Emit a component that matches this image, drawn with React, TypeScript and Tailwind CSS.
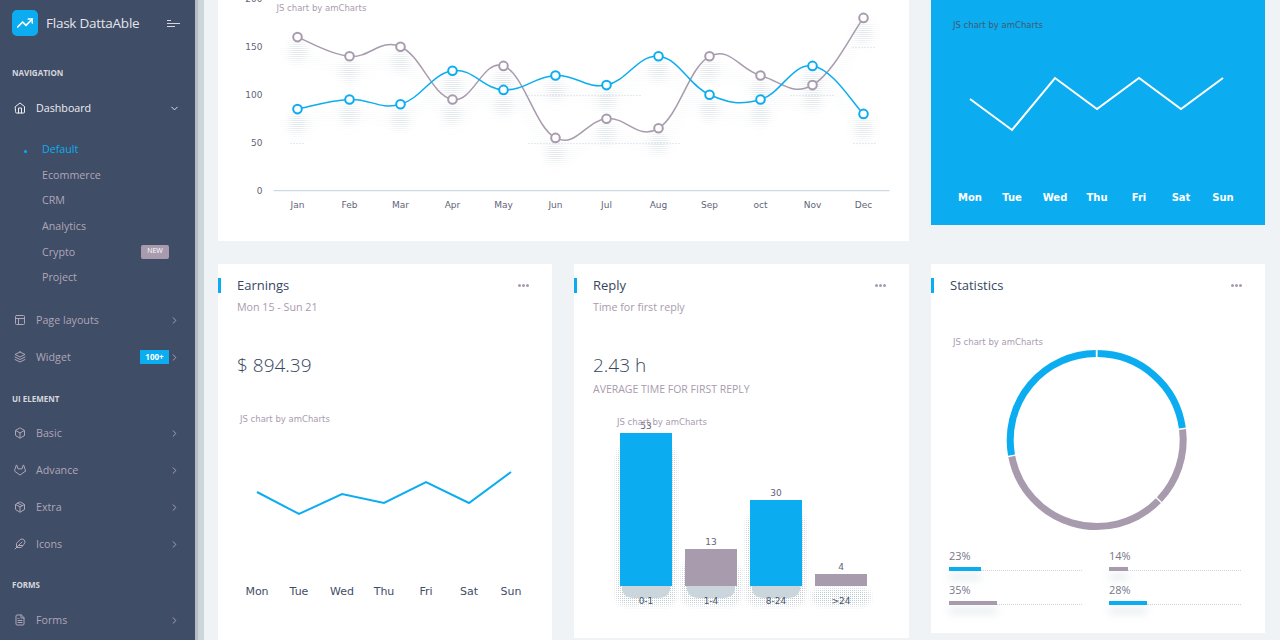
import type { ReactNode } from "react";
import {
  FiBox,
  FiChevronDown,
  FiChevronRight,
  FiFeather,
  FiFileText,
  FiGitlab,
  FiHome,
  FiLayers,
  FiLayout,
  FiPackage,
  FiTrendingUp,
} from "react-icons/fi";

const months = ["Jan", "Feb", "Mar", "Apr", "May", "Jun", "Jul", "Aug", "Sep", "oct", "Nov", "Dec"];
const monthX = [297, 349, 400, 452, 503, 555, 606, 658, 709, 760, 812, 863];
const grayVals = [160, 140, 150, 95, 130, 55, 75, 65, 140, 120, 110, 180];
const blueVals = [85, 95, 90, 125, 105, 120, 110, 140, 100, 95, 130, 80];
const days = ["Mon", "Tue", "Wed", "Thu", "Fri", "Sat", "Sun"];

const toY = (v: number) => 190.7 - v * 0.96;

function smooth(pts: number[][]) {
  let d = `M${pts[0][0]} ${pts[0][1]}`;
  const k = 0.2;
  for (let i = 0; i < pts.length - 1; i++) {
    const p0 = pts[i - 1] ?? pts[i];
    const p1 = pts[i];
    const p2 = pts[i + 1];
    const p3 = pts[i + 2] ?? p2;
    const c1x = p1[0] + (p2[0] - p0[0]) * k;
    const c1y = p1[1] + (p2[1] - p0[1]) * k;
    const c2x = p2[0] - (p3[0] - p1[0]) * k;
    const c2y = p2[1] - (p3[1] - p1[1]) * k;
    d += ` C${c1x} ${c1y} ${c2x} ${c2y} ${p2[0]} ${p2[1]}`;
  }
  return d;
}

function arc(cx: number, cy: number, r: number, from: number, to: number) {
  const pt = (a: number) => {
    const t = ((a - 90) * Math.PI) / 180;
    return `${cx + r * Math.cos(t)} ${cy + r * Math.sin(t)}`;
  };
  return `M${pt(from)} A${r} ${r} 0 ${to - from > 180 ? 1 : 0} 1 ${pt(to)}`;
}

// the reference's shadows are dithered, so paint them as dots through a blurred mask
function DotShadow({ id, blur, children }: { id: string; blur: number; children: ReactNode }) {
  return (
    <>
      <defs>
        <pattern id={`${id}-dots`} width="2" height="2" patternUnits="userSpaceOnUse">
          <rect width="1" height="1" fill="#bccad2" />
        </pattern>
        <filter id={`${id}-blur`} x="-50%" y="-50%" width="200%" height="200%">
          <feGaussianBlur stdDeviation={blur} />
        </filter>
        <mask id={`${id}-mask`} maskUnits="userSpaceOnUse" x="200" y="0" width="1100" height="700">
          <g filter={`url(#${id}-blur)`}>{children}</g>
        </mask>
      </defs>
      <rect x="200" y="0" width="1100" height="700" fill={`url(#${id}-dots)`} mask={`url(#${id}-mask)`} />
    </>
  );
}

function NavLabel({ children, className }: { children: ReactNode; className: string }) {
  return (
    <div className={`h-5 pl-3 flex items-center text-[8px] font-bold text-[#d6d6de] ${className}`}>{children}</div>
  );
}

function NavItem({ icon, label, badge }: { icon: ReactNode; label: string; badge?: ReactNode }) {
  return (
    <div className="h-[37px] flex items-center pl-[14px] pr-[15px] text-[10.7px] text-[#b0a6b8]">
      <span className="w-[22px] text-[12px]">{icon}</span>
      <span className="flex-1">{label}</span>
      {badge}
      <FiChevronRight className="w-[11px] h-[11px]" />
    </div>
  );
}

function SubItem({ label, active, badge }: { label: string; active?: boolean; badge?: ReactNode }) {
  return (
    <div className={`h-[25.6px] flex items-center pr-[26px] text-[10.7px] ${active ? "text-[#0cadf0]" : "text-[#b0a6b8]"}`}>
      <span className="w-[42px] flex justify-end pr-[15px] pt-[4px]">
        {active && <span className="w-[3px] h-[3px] rounded-full bg-[#0cadf0]" />}
      </span>
      <span className="flex-1">{label}</span>
      {badge}
    </div>
  );
}

function Sidebar() {
  return (
    <aside className="relative z-10 w-[195px] shrink-0 h-full overflow-hidden bg-[#3f4d67] shadow-[3px_0_0_#b8bac4,9px_0_0_#cbd6db]">
      <div className="h-[46px] flex items-center pl-3 pr-[15px]">
        <div className="w-[26px] h-[26px] rounded-[5px] bg-[#0cadf0] flex items-center justify-center text-white">
          <FiTrendingUp className="w-4 h-4" strokeWidth={2.5} />
        </div>
        <span className="ml-2 flex-1 text-[13.5px] text-[#e4e4ea] tracking-[-0.25px]">Flask DattaAble</span>
        <div className="flex flex-col gap-[2px] w-[13px]">
          <span className="h-px w-[4px] bg-[#d6d6de]" />
          <span className="h-px w-[13px] bg-[#d6d6de]" />
          <span className="h-px w-[8px] bg-[#d6d6de]" />
        </div>
      </div>

      <NavLabel className="mt-[17px]">NAVIGATION</NavLabel>
      <div className="mt-[6.5px] h-[37px] flex items-center pl-[14px] pr-[15px] text-[10.7px] text-[#eeeef2]">
        <span className="w-[22px] text-[12px]"><FiHome /></span>
        <span className="flex-1">Dashboard</span>
        <FiChevronDown className="w-[11px] h-[11px]" />
      </div>
      <div className="pt-[10px] pb-[11.7px]">
        <SubItem label="Default" active />
        <SubItem label="Ecommerce" />
        <SubItem label="CRM" />
        <SubItem label="Analytics" />
        <SubItem
          label="Crypto"
          badge={<span className="w-[28px] h-[14px] rounded-[2px] bg-[#a89bae] text-white text-[7px] flex items-center justify-center">NEW</span>}
        />
        <SubItem label="Project" />
      </div>
      <NavItem icon={<FiLayout />} label="Page layouts" />
      <NavItem
        icon={<FiLayers />}
        label="Widget"
        badge={<span className="w-[29px] h-[14px] bg-[#0cadf0] text-white text-[8px] font-bold flex items-center justify-center">100+</span>}
      />

      <NavLabel className="mt-[13.5px]">UI ELEMENT</NavLabel>
      <div className="mt-[5.5px]">
        <NavItem icon={<FiBox />} label="Basic" />
        <NavItem icon={<FiGitlab />} label="Advance" />
        <NavItem icon={<FiPackage />} label="Extra" />
        <NavItem icon={<FiFeather />} label="Icons" />
      </div>

      <NavLabel className="mt-[12.5px]">FORMS</NavLabel>
      <div className="mt-[6.5px]">
        <NavItem icon={<FiFileText />} label="Forms" />
      </div>
    </aside>
  );
}

function Watermark({ x, y, fill = "#a99cb0" }: { x: number; y: number; fill?: string }) {
  return (
    <text x={x} y={y} fontSize="8.5" fill={fill}>
      JS chart by amCharts
    </text>
  );
}

function MainChart() {
  const gray = grayVals.map((v, i) => [monthX[i], toY(v)]);
  const blue = blueVals.map((v, i) => [monthX[i], toY(v)]);
  const dotted: number[][] = [
    [290, 304, 143],
    [528, 680, 143],
    [853, 875, 143],
    [525, 640, 95],
    [790, 835, 95],
    [852, 875, 47],
  ];
  return (
    <svg viewBox="218 0 690 241" className="block w-full h-full [font-family:'DejaVu_Sans',sans-serif]">
      <DotShadow id="main" blur={5}>
        {[...gray, ...blue].map(([x, y], i) => (
          <ellipse key={i} cx={x} cy={y + 15} rx="9" ry="10" fill="#fff" />
        ))}
        <g fill="none" stroke="#fff" strokeWidth="3" opacity="0.5" transform="translate(0 15)">
          <path d={smooth(gray)} />
          <path d={smooth(blue)} />
        </g>
      </DotShadow>
      {dotted.map(([a, b, y], i) => (
        <line key={i} x1={a} x2={b} y1={y + 0.5} y2={y + 0.5} stroke="#c9d5dc" strokeWidth="1" strokeDasharray="1 2" />
      ))}
      <text x="262" y="2" textAnchor="end" fontSize="9" fill="#5f6478">200</text>
      <text x="262" y="50" textAnchor="end" fontSize="9" fill="#5f6478">150</text>
      <text x="262" y="98" textAnchor="end" fontSize="9" fill="#5f6478">100</text>
      <text x="262" y="146" textAnchor="end" fontSize="9" fill="#5f6478">50</text>
      <text x="262" y="194" textAnchor="end" fontSize="9" fill="#5f6478">0</text>
      <Watermark x={276} y={11} />
      <line x1="273" x2="889" y1="190.7" y2="190.7" stroke="#c3d2da" strokeWidth="1" />
      {months.map((m, i) => (
        <text key={m} x={monthX[i]} y="208" textAnchor="middle" fontSize="9" fill="#5f6478">{m}</text>
      ))}
      <path d={smooth(gray)} fill="none" stroke="#a89bae" strokeWidth="1.5" />
      <path d={smooth(blue)} fill="none" stroke="#0cadf0" strokeWidth="1.5" />
      {gray.map(([x, y], i) => (
        <circle key={i} cx={x} cy={y} r="4.3" fill="#fff" stroke="#a89bae" strokeWidth="2" />
      ))}
      {blue.map(([x, y], i) => (
        <circle key={i} cx={x} cy={y} r="4.3" fill="#fff" stroke="#0cadf0" strokeWidth="2" />
      ))}
    </svg>
  );
}

function BlueChart() {
  const xs = [970, 1012, 1055, 1097, 1139, 1181, 1223];
  const ys = [99, 130, 78, 109, 78, 109, 78];
  return (
    <svg viewBox="931 0 334 225" className="block w-full h-full [font-family:'DejaVu_Sans',sans-serif]">
      <Watermark x={953} y={28} fill="#3f5a73" />
      <polyline points={xs.map((x, i) => `${x},${ys[i]}`).join(" ")} fill="none" stroke="#fff" strokeWidth="2" />
      {days.map((d, i) => (
        <text key={d} x={xs[i]} y="201" textAnchor="middle" fontSize="10" fontWeight="700" fill="#fff">{d}</text>
      ))}
    </svg>
  );
}

function CardHead({ title, sub }: { title: string; sub?: string }) {
  return (
    <>
      <div className="pt-[14px]">
        <div className="h-[15px] border-l-[3px] border-[#0cadf0] pl-4 pr-[23px] flex items-center justify-between">
          <span className="text-[13px] text-[#37475f]">{title}</span>
          <span className="flex gap-px">
            <span className="w-[3px] h-[3px] rounded-full bg-[#a89bae]" />
            <span className="w-[3px] h-[3px] rounded-full bg-[#a89bae]" />
            <span className="w-[3px] h-[3px] rounded-full bg-[#a89bae]" />
          </span>
        </div>
      </div>
      {sub && <div className="mt-[6px] h-4 pl-[19px] text-[10.7px] leading-4 text-[#a89bae]">{sub}</div>}
    </>
  );
}

function EarningsChart() {
  const xs = [257, 299, 342, 384, 426, 469, 511];
  const ys = [492, 514, 494, 503, 482, 503, 472];
  return (
    <svg viewBox="218 405 334 205" className="mt-[28px] block w-[334px] h-[205px] [font-family:'DejaVu_Sans',sans-serif]">
      <Watermark x={240} y={422} />
      <polyline points={xs.map((x, i) => `${x},${ys[i]}`).join(" ")} fill="none" stroke="#0cadf0" strokeWidth="2" />
      {days.map((d, i) => (
        <text key={d} x={xs[i]} y="595" textAnchor="middle" fontSize="11" fill="#3f4d67">{d}</text>
      ))}
    </svg>
  );
}

function ReplyChart() {
  const bars = [
    { x: 620, y: 433, val: "53", label: "0-1", color: "#0cadf0" },
    { x: 685, y: 549, val: "13", label: "1-4", color: "#a89bae" },
    { x: 750, y: 500, val: "30", label: "8-24", color: "#0cadf0" },
    { x: 815, y: 574, val: "4", label: ">24", color: "#a89bae" },
  ];
  return (
    <svg viewBox="574 405 334 215" className="mt-[8px] block w-[334px] h-[215px] [font-family:'DejaVu_Sans',sans-serif]">
      <DotShadow id="bars" blur={2.5}>
        {bars.map((b) => (
          <rect key={b.x} x={b.x - 4} y={b.y + 14} width="60" height={592 - b.y} rx="10" fill="#fff" />
        ))}
      </DotShadow>
      {bars.slice(0, 3).map((b) => (
        <path key={b.x} d={`M${b.x + 2} 586 H${b.x + 50} V590 Q${b.x + 48} 598 ${b.x + 38} 598 H${b.x + 14} Q${b.x + 4} 598 ${b.x + 2} 590 Z`} fill="#cbd6dc" />
      ))}
      {bars.map((b) => (
        <g key={b.x}>
          <rect x={b.x} y={b.y} width="52" height={586 - b.y} fill={b.color} />
          <text x={b.x + 26} y={b.y - 4} textAnchor="middle" fontSize="9" fill="#5f6478">{b.val}</text>
          <text x={b.x + 26} y="604" textAnchor="middle" fontSize="9" fill="#4a5368">{b.label}</text>
        </g>
      ))}
      <Watermark x={617} y={425} />
    </svg>
  );
}

function Donut() {
  const cx = 1096.7;
  const cy = 440;
  const r = 86.5;
  return (
    <svg viewBox="931 330 334 205" className="mt-[37px] block w-[334px] h-[205px] [font-family:'DejaVu_Sans',sans-serif]">
      <Watermark x={953} y={345} />
      <g fill="none" strokeWidth="7">
        <path d={arc(cx, cy, r, 0.6, 82)} stroke="#0cadf0" />
        <path d={arc(cx, cy, r, 83, 133.5)} stroke="#a89bae" />
        <path d={arc(cx, cy, r, 134.5, 259)} stroke="#a89bae" />
        <path d={arc(cx, cy, r, 260, 359.4)} stroke="#0cadf0" />
      </g>
    </svg>
  );
}

function Progress({ pct, barClass }: { pct: string; barClass: string }) {
  return (
    <div>
      <div className="h-4 text-[11px] leading-4 text-[#77778a]">{pct}</div>
      <div className="mt-[3px] h-1 flex items-end">
        <span className={`h-1 shrink-0 shadow-[0_8px_8px_rgba(201,213,220,0.7)] ${barClass}`} />
        <span className="flex-1 border-b border-dotted border-[#c9d5dc]" />
      </div>
    </div>
  );
}

export default function App() {
  return (
    <div className="flex h-screen w-full overflow-hidden bg-[#f0f3f6] [font-family:'Open_Sans',sans-serif]">
      <Sidebar />
      <main className="flex-1 pl-[23px] pr-[15px] overflow-hidden">
        <div className="grid grid-cols-[334px_335px_334px] gap-x-[22px] gap-y-[23px] items-start">
          <div className="col-span-2 h-[241px] bg-white">
            <MainChart />
          </div>
          <div className="h-[225px] bg-[#0cadf0]">
            <BlueChart />
          </div>

          <section className="h-[380px] bg-white">
            <CardHead title="Earnings" sub="Mon 15 - Sun 21" />
            <div className="mt-[38px] pl-[19px] h-6 text-[19px] leading-6 font-light text-[#37475f]">$ 894.39</div>
            <EarningsChart />
          </section>

          <section className="h-[374px] bg-white">
            <CardHead title="Reply" sub="Time for first reply" />
            <div className="mt-[38px] pl-[19px] h-6 text-[19px] leading-6 font-light text-[#37475f]">2.43 h</div>
            <div className="mt-[4px] h-4 pl-[19px] text-[10.5px] leading-4 text-[#a89bae]">AVERAGE TIME FOR FIRST REPLY</div>
            <ReplyChart />
          </section>

          <section className="h-[369px] bg-white">
            <CardHead title="Statistics" />
            <Donut />
            <div className="mt-[13px] pl-[18px] grid grid-cols-[133px_132px] gap-x-[27px] gap-y-[11px]">
              <Progress pct="23%" barClass="w-[32px] bg-[#0cadf0]" />
              <Progress pct="14%" barClass="w-[19px] bg-[#a89bae]" />
              <Progress pct="35%" barClass="w-[48px] bg-[#a89bae]" />
              <Progress pct="28%" barClass="w-[38px] bg-[#0cadf0]" />
            </div>
          </section>
        </div>
      </main>
    </div>
  );
}
